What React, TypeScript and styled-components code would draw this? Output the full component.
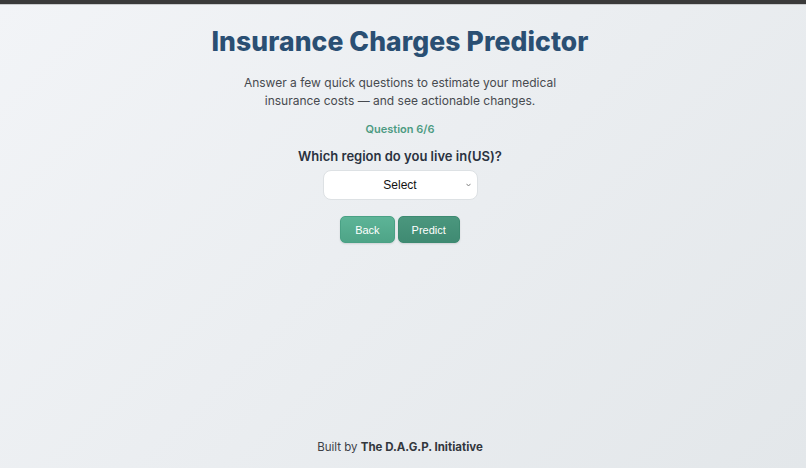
import React, { useState } from 'react';
import styled, { createGlobalStyle } from 'styled-components';

const GlobalStyle = createGlobalStyle`
  html, body {
    margin: 0;
    padding: 0;
    height: 100%;
  }
  body {
    font-family: 'Inter', 'Noto Sans', sans-serif;
  }
`;

const Page = styled.div`
  min-height: 468px;
  width: 100%;
  display: flex;
  flex-direction: column;
  padding-right: 6px;
  background: linear-gradient(135deg, #f2f4f7 0%, #e3e7ea 100%);
  box-sizing: border-box;
`;

const TopBar = styled.div`
  height: 4px;
  margin-right: -6px;
  background: #3a3a3a;
  border-bottom: 1px solid #c9cbcd;
`;

const Main = styled.main`
  flex: 1;
  display: flex;
  flex-direction: column;
  align-items: center;
  padding-top: 20px;
`;

const Title = styled.h1`
  margin: 0;
  font-size: 26.5px;
  font-weight: 800;
  letter-spacing: 0.1px;
  color: #2a4f73;
`;

const Subtitle = styled.p`
  margin: 17px 0 0;
  max-width: 320px;
  text-align: center;
  font-size: 12px;
  line-height: 18px;
  color: #474a4f;
`;

const Step = styled.div`
  margin-top: 12px;
  font-size: 11px;
  font-weight: 600;
  color: #4c9b82;
`;

const Question = styled.h2`
  margin: 12px 0 0;
  font-size: 13px;
  font-weight: 600;
  color: #2a3240;
`;

const SelectWrap = styled.div`
  position: relative;
  margin-top: 6px;
`;

const Select = styled.select`
  display: block;
  width: 155px;
  height: 30px;
  border: 1px solid #dde1e4;
  border-radius: 8px;
  background: #fff;
  font-family: 'Liberation Sans', Arial, sans-serif;
  font-size: 12px;
  color: #111;
  text-align: center;
  text-align-last: center;
  appearance: none;
  -webkit-appearance: none;
`;

const Chevron = styled.svg`
  position: absolute;
  right: 7px;
  top: 13px;
  width: 5px;
  height: 4px;
  pointer-events: none;
`;

const Actions = styled.div`
  margin-top: 16px;
  display: flex;
  gap: 3px;
`;

const Button = styled.button<{ $dark?: boolean }>`
  height: 27px;
  padding: 0 ${p => (p.$dark ? 13 : 14)}px;
  border: 1px solid ${p => (p.$dark ? '#3d8a71' : '#4aa185')};
  border-radius: 5px;
  background: ${p =>
    p.$dark
      ? 'linear-gradient(180deg, #4b977e 0%, #3f8a72 100%)'
      : 'linear-gradient(180deg, #5db497 0%, #4ea487 100%)'};
  color: #fff;
  font-family: 'Liberation Sans', Arial, sans-serif;
  font-size: 11px;
  cursor: pointer;
  box-shadow: 0 1px 2px rgba(0, 0, 0, 0.12);
`;

const Footer = styled.footer`
  padding-bottom: 14px;
  text-align: center;
  font-size: 11.5px;
  color: #3d4147;
  b {
    font-weight: 700;
    color: #33373d;
  }
`;

const regions = ['Northeast', 'Northwest', 'Southeast', 'Southwest'];

export default function App() {
  const [region, setRegion] = useState('');

  return (
    <>
      <GlobalStyle />
      <Page>
        <TopBar />
        <Main>
          <Title>Insurance Charges Predictor</Title>
          <Subtitle>
            Answer a few quick questions to estimate your medical insurance costs — and see
            actionable changes.
          </Subtitle>
          <Step>Question 6/6</Step>
          <Question>Which region do you live in(US)?</Question>
          <SelectWrap>
            <Select value={region} onChange={e => setRegion(e.target.value)}>
              <option value="">Select</option>
              {regions.map(r => (
                <option key={r} value={r.toLowerCase()}>
                  {r}
                </option>
              ))}
            </Select>
            <Chevron viewBox="0 0 5 4">
              <path d="M0.5 0.8 L2.5 3 L4.5 0.8" fill="none" stroke="#777" strokeWidth="0.9" />
            </Chevron>
          </SelectWrap>
          <Actions>
            <Button>Back</Button>
            <Button $dark>Predict</Button>
          </Actions>
        </Main>
        <Footer>
          Built by <b>The D.A.G.P. Initiative</b>
        </Footer>
      </Page>
    </>
  );
}
